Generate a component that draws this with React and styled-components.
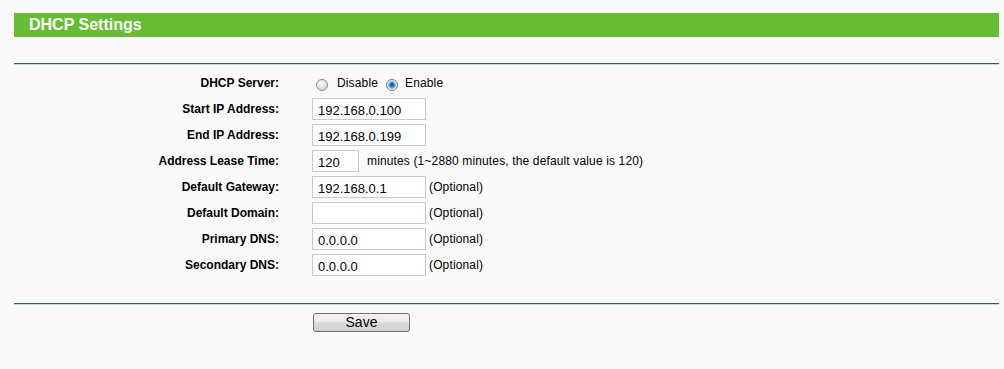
import styled, { createGlobalStyle } from 'styled-components';

const GlobalStyle = createGlobalStyle`
  html, body {
    margin: 0;
    padding: 0;
    background: #fafafa;
  }
  body {
    font-family: "Liberation Sans", Arial, sans-serif;
    font-size: 12px;
    color: #000;
  }
`;

const Page = styled.div`
  width: 985px;
  padding: 13px 0 0 14px;
`;

const TitleBar = styled.div`
  height: 24px;
  background: #68bb34;
  color: #fff;
  font-weight: bold;
  font-size: 16px;
  line-height: 24px;
  padding-left: 15px;
`;

const Divider = styled.div`
  height: 1px;
  background: #27693c;
  border-bottom: 1px solid #c4e2ca;
  margin-top: ${({ top }) => top}px;
`;

const Form = styled.div`
  display: grid;
  grid-template-columns: 265px 1fr;
  grid-auto-rows: 26px;
  padding-top: 5px;
`;

const Label = styled.div`
  display: flex;
  align-items: center;
  justify-content: flex-end;
  font-weight: bold;
`;

const Field = styled.div`
  display: flex;
  align-items: center;
  padding-left: 33px;
`;

const TextInput = styled.input`
  box-sizing: border-box;
  width: ${({ w }) => w || 114}px;
  height: 22px;
  margin: 0;
  padding: 2px 5px 0;
  border: 1px solid #cacaca;
  background: #fff;
  font-family: "Liberation Sans", Arial, sans-serif;
  font-size: 13px;
  color: #000;
  outline: none;
`;

const Note = styled.span`
  margin-left: ${({ gap }) => gap}px;
  letter-spacing: 0.14px;
`;

const Radio = styled.input.attrs({ type: 'radio' })`
  appearance: none;
  box-sizing: border-box;
  width: 12px;
  height: 12px;
  margin: 3px 0 0 ${({ left }) => left}px;
  border-radius: 50%;
  border: 1px solid #8f8f8f;
  background: radial-gradient(circle at 40% 35%, #ffffff 0, #e6e6e6 45%, #bdbdbd 100%);

  &:checked {
    border-color: #5b7f9e;
    background: radial-gradient(circle at 50% 50%, #0e4f86 0, #2f7ab8 2px, #9cc2e2 3.5px, #eaf2f8 4.5px, #c9d6e0 100%);
  }
`;

const RadioText = styled.span`
  margin-left: ${({ gap }) => gap}px;
  letter-spacing: 0.14px;
`;

const Actions = styled.div`
  padding: 8px 0 0 299px;
`;

const Button = styled.button`
  box-sizing: border-box;
  width: 97px;
  height: 19px;
  padding: 0;
  border: 1px solid #707070;
  border-radius: 3px;
  background: linear-gradient(#f2f2f2 0, #ebebeb 45%, #dddddd 50%, #cfcfcf 100%);
  font-family: "Liberation Sans", Arial, sans-serif;
  font-size: 14px;
  line-height: 17px;
  color: #000;
`;

const rows = [
  { label: 'Start IP Address:', value: '192.168.0.100' },
  { label: 'End IP Address:', value: '192.168.0.199' },
  { label: 'Address Lease Time:', value: '120', width: 47, note: 'minutes (1~2880 minutes, the default value is 120)', gap: 8 },
  { label: 'Default Gateway:', value: '192.168.0.1', note: '(Optional)' },
  { label: 'Default Domain:', value: '', note: '(Optional)' },
  { label: 'Primary DNS:', value: '0.0.0.0', note: '(Optional)' },
  { label: 'Secondary DNS:', value: '0.0.0.0', note: '(Optional)' },
];

export default function App() {
  return (
    <Page>
      <GlobalStyle />
      <TitleBar>DHCP Settings</TitleBar>
      <Divider top={26} />
      <Form>
        <Label>DHCP Server:</Label>
        <Field>
          <Radio name="dhcp" left={4} />
          <RadioText gap={9}>Disable</RadioText>
          <Radio name="dhcp" left={8} defaultChecked />
          <RadioText gap={7}>Enable</RadioText>
        </Field>
        {rows.map((r) => (
          <>
            <Label key={r.label}>{r.label}</Label>
            <Field key={r.label + '-f'}>
              <TextInput w={r.width} defaultValue={r.value} />
              {r.note && <Note gap={r.gap || 3}>{r.note}</Note>}
            </Field>
          </>
        ))}
      </Form>
      <Divider top={25} />
      <Actions>
        <Button>Save</Button>
      </Actions>
    </Page>
  );
}
